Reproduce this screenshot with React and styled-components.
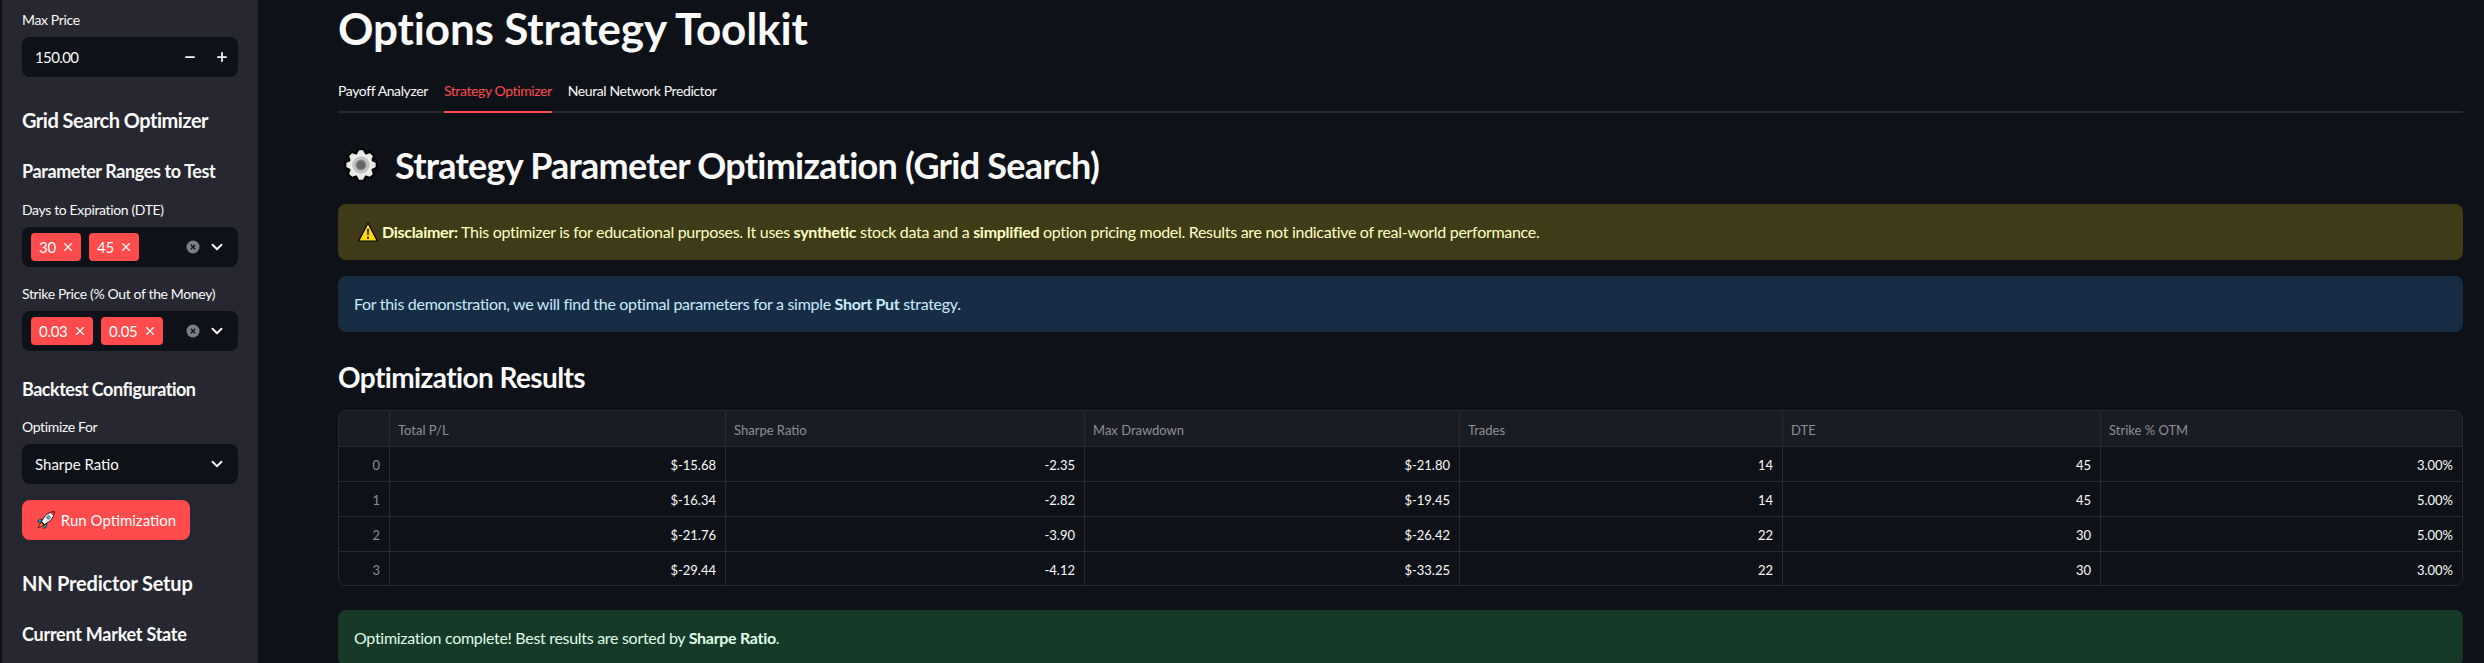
import React from 'react'
import styled, { createGlobalStyle } from 'styled-components'
import { ChevronDown, Minus, Plus, X } from 'lucide-react'

const GlobalStyle = createGlobalStyle`
  html, body {
    margin: 0;
    height: 100%;
    overflow: hidden;
    background: #0e1117;
  }
  * { box-sizing: border-box; }
  body {
    font-family: "Lato", "Noto Sans", sans-serif;
    color: #fafafa;
  }
`

const Page = styled.div`
  display: flex;
  height: 663px;
  padding-left: 2px;
  overflow: hidden;
  background: #0e1117;
`

const Sidebar = styled.aside`
  width: 256px;
  flex: none;
  display: flex;
  flex-direction: column;
  background: #262730;
  padding: 9px 20px 0;
  overflow: hidden;
  > * { flex: none; }
`

const FieldLabel = styled.div`
  font-size: 14px;
  letter-spacing: -0.36px;
  line-height: 21px;
  height: 21px;
  margin-bottom: 7px;
  color: #fafafa;
  white-space: nowrap;
`

const Control = styled.div`
  height: 40px;
  background: #0e1117;
  border-radius: 8px;
  display: flex;
  align-items: center;
  font-size: 14px;
  margin-bottom: 16px;
`

const ValueText = styled.span`
  padding-left: 13px;
  flex: 1;
  font-size: 15px;
  letter-spacing: ${p => (p.$tight ? '-0.6px' : '0')};
`

const StepButton = styled.span`
  width: 32px;
  display: flex;
  justify-content: center;
  color: #fafafa;
`

const Chips = styled.div`
  flex: 1;
  display: flex;
  gap: 8px;
  padding-left: 9px;
`

const Chip = styled.span`
  height: 28px;
  width: ${p => p.$w}px;
  background: #ff4b4b;
  border-radius: 4px;
  color: #fff;
  display: flex;
  align-items: center;
  justify-content: space-between;
  padding: 0 6px 0 8px;
  font-size: 15px;
  letter-spacing: -0.3px;
`

const ClearSlot = styled.span`
  display: flex;
  margin-right: 2px;
`

const Caret = styled.span`
  width: 36px;
  padding-right: 6px;
  display: flex;
  justify-content: center;
  color: #fafafa;
`

const SideTitle = styled.h3`
  margin: ${p => p.$top}px 0 ${p => p.$after || 0}px;
  font-size: ${p => p.$size}px;
  letter-spacing: ${p => p.$track}px;
  line-height: 28px;
  height: 28px;
  font-weight: 700;
  color: #fafafa;
  white-space: nowrap;
`

const RunButton = styled.button`
  width: 168px;
  height: 40px;
  border: none;
  border-radius: 8px;
  background: #ff4b4b;
  color: #fff;
  font: inherit;
  font-size: 15px;
  display: flex;
  align-items: center;
  justify-content: center;
  gap: 5px;
  padding: 0;
`

const Main = styled.main`
  flex: 1;
  min-width: 0;
  padding: 0 21px 0 80px;
  overflow: hidden;
`

const Title = styled.h1`
  margin: 0;
  font-size: 44px;
  letter-spacing: -0.15px;
  line-height: 56px;
  font-weight: 700;
  color: #fafafa;
  white-space: nowrap;
`

const Tabs = styled.div`
  display: flex;
  gap: 16px;
  margin-top: 17px;
  height: 40px;
  border-bottom: 2px solid #262730;
`

const Tab = styled.div`
  height: 40px;
  font-size: 14px;
  letter-spacing: -0.4px;
  line-height: 36px;
  white-space: nowrap;
  color: ${p => (p.$active ? '#ff4b4b' : '#fafafa')};
  border-bottom: 2px solid ${p => (p.$active ? '#ff4b4b' : 'transparent')};
`

const SectionTitle = styled.h2`
  display: flex;
  align-items: center;
  gap: 16px;
  margin: 26px 0 13px 5px;
  height: 52px;
  font-size: 36px;
  letter-spacing: -0.75px;
  font-weight: 700;
  white-space: nowrap;
  color: #fafafa;
`

const Alert = styled.div`
  display: flex;
  align-items: center;
  gap: 4px;
  height: 56px;
  padding: 0 16px 0 ${p => p.$pad || 16}px;
  margin-bottom: 16px;
  border-radius: 8px;
  font-size: 16px;
  letter-spacing: -0.3px;
  line-height: 24px;
  background: ${p => p.$bg};
  color: ${p => p.$fg};
  b { font-weight: 700; }
  span { white-space: pre-wrap; }
  svg { flex: none; }
`

const SubTitle = styled.h3`
  margin: 25px 0 13px;
  height: 40px;
  font-size: 28px;
  letter-spacing: -0.6px;
  line-height: 40px;
  font-weight: 700;
  color: #fafafa;
`

const Grid = styled.div`
  border: 1px solid #262a31;
  border-radius: 8px;
  overflow: hidden;
  height: 176px;
  margin-bottom: 24px;
`

const Row = styled.div`
  display: grid;
  grid-template-columns: 50px 336px 359px 375px 323px 318px 1fr;
  height: 35px;
  background: ${p => (p.$head ? '#1a1c24' : '#0e1117')};
  & + & { border-top: 1px solid #262a31; }
`

const Cell = styled.div`
  display: flex;
  align-items: center;
  justify-content: ${p => (p.$head ? 'flex-start' : 'flex-end')};
  padding: 2px 9px 0 8px;
  font-size: 13px;
  color: ${p => (p.$muted ? '#8e9096' : '#fafafa')};
  & + & { border-left: 1px solid #262a31; }
`

// eight rounded teeth round the centre
const gearPoints = Array.from({ length: 8 }, (_, i) => {
  const a = (i * Math.PI) / 4 - Math.PI / 2
  const pt = (r, d) => `${(18 + r * Math.cos(a + d)).toFixed(2)},${(18 + r * Math.sin(a + d)).toFixed(2)}`
  return [pt(12.6, -0.39), pt(16, -0.17), pt(16, 0.17), pt(12.6, 0.39)].join(' ')
}).join(' ')

const GearIcon = () => (
  <svg width="36" height="36" viewBox="0 0 36 36">
    <polygon points={gearPoints} fill="#e8e8e8" stroke="#000" strokeWidth="2.2" strokeLinejoin="round" />
    <circle cx="18" cy="18" r="9.5" fill="#c4c4c4" stroke="#f4f4f4" strokeWidth="1.2" />
    <circle cx="18" cy="18" r="5" fill="#666" stroke="#939393" strokeWidth="1.2" />
  </svg>
)

const WarnIcon = () => (
  <svg width="20" height="20" viewBox="0 0 20 20">
    <path d="M10 1 19.300 19H.7z" fill="#ffd60a" stroke="#000" strokeWidth="1.200" strokeLinejoin="round" />
    <path d="M9 7h2l-.4 6.500h-1.200z" fill="#222" />
    <circle cx="10" cy="15.800" r="1.100" fill="#222" />
  </svg>
)

const RocketIcon = () => (
  <svg width="20" height="20" viewBox="0 0 20 20">
    <path d="M5 12 2 18l6-3z" fill="#f08a24" stroke="#3a1606" strokeWidth=".8" />
    <path d="M6 9 2.500 10l-1 2.500L5 12zM11 14l-1 3.500-2.500 1L8 15z" fill="#2a9fd8" stroke="#0b2a3a" strokeWidth=".7" />
    <path d="M18.500 1.500c-5 .5-8.500 2.500-11.500 7.500L5.500 11.500l3 3L11 13c5-3 7-6.500 7.500-11.500z" fill="#f4f6f8" stroke="#111" strokeWidth="1" />
    <path d="M18.500 1.500c-1.500.1-3 .5-4.300 1.100l3.200 3.200c.6-1.300 1-2.800 1.100-4.300z" fill="#d9242b" />
    <circle cx="12.500" cy="7.500" r="1.700" fill="#5fb6e5" stroke="#345" strokeWidth=".7" />
  </svg>
)

const ClearIcon = () => (
  <svg width="14" height="14" viewBox="0 0 14 14">
    <circle cx="7" cy="7" r="6.500" fill="#7c7e8a" />
    <path d="M4.800 4.800l4.400 4.400M9.200 4.800l-4.400 4.400" stroke="#14161c" strokeWidth="1.500" />
  </svg>
)

const MultiSelect = ({ values, width }) => (
  <Control>
    <Chips>
      {values.map(v => (
        <Chip key={v} $w={width}>
          {v}
          <X size={14} strokeWidth={2} />
        </Chip>
      ))}
    </Chips>
    <ClearSlot><ClearIcon /></ClearSlot>
    <Caret><ChevronDown size={18} strokeWidth={2.500} /></Caret>
  </Control>
)

const columns = ['', 'Total P/L', 'Sharpe Ratio', 'Max Drawdown', 'Trades', 'DTE', 'Strike % OTM']

const rows = [
  ['0', '$-15.68', '-2.35', '$-21.80', '14', '45', '3.00%'],
  ['1', '$-16.34', '-2.82', '$-19.45', '14', '45', '5.00%'],
  ['2', '$-21.76', '-3.90', '$-26.42', '22', '30', '5.00%'],
  ['3', '$-29.44', '-4.12', '$-33.25', '22', '30', '3.00%'],
]

const App = () => {
  return (
    <Page>
      <GlobalStyle />
      <Sidebar>
        <FieldLabel>Max Price</FieldLabel>
        <Control>
          <ValueText $tight>150.00</ValueText>
          <StepButton><Minus size={14} strokeWidth={3} /></StepButton>
          <StepButton><Plus size={14} strokeWidth={3} /></StepButton>
        </Control>

        <SideTitle $size={20} $track={-0.5} $top={13}>Grid Search Optimizer</SideTitle>
        <SideTitle $size={18} $track={-0.4} $top={23} $after={14}>Parameter Ranges to Test</SideTitle>
        <FieldLabel>Days to Expiration (DTE)</FieldLabel>
        <MultiSelect values={['30', '45']} width={50} />
        <FieldLabel>Strike Price (% Out of the Money)</FieldLabel>
        <MultiSelect values={['0.03', '0.05']} width={62} />

        <SideTitle $size={18} $track={-0.5} $top={8} $after={13}>Backtest Configuration</SideTitle>
        <FieldLabel>Optimize For</FieldLabel>
        <Control>
          <ValueText>Sharpe Ratio</ValueText>
          <Caret><ChevronDown size={18} strokeWidth={2.500} /></Caret>
        </Control>
        <RunButton><RocketIcon />Run Optimization</RunButton>

        <SideTitle $size={20} $track={-0.2} $top={29}>NN Predictor Setup</SideTitle>
        <SideTitle $size={18} $track={-0.25} $top={23}>Current Market State</SideTitle>
      </Sidebar>

      <Main>
        <Title>Options Strategy Toolkit</Title>
        <Tabs>
          <Tab>Payoff Analyzer</Tab>
          <Tab $active>Strategy Optimizer</Tab>
          <Tab>Neural Network Predictor</Tab>
        </Tabs>

        <SectionTitle><GearIcon />Strategy Parameter Optimization (Grid Search)</SectionTitle>

        <Alert $bg="#3e3b16" $fg="#ffffc2" $pad={20}>
          <WarnIcon />
          <span><b>Disclaimer:</b> This optimizer is for educational purposes. It uses <b>synthetic</b> stock data and a <b>simplified</b> option pricing model. Results are not indicative of real-world performance.</span>
        </Alert>
        <Alert $bg="#172d43" $fg="#c7ebff">
          <span>For this demonstration, we will find the optimal parameters for a simple <b>Short Put</b> strategy.</span>
        </Alert>

        <SubTitle>Optimization Results</SubTitle>

        <Grid>
          <Row $head>
            {columns.map((c, i) => <Cell key={i} $head $muted>{c}</Cell>)}
          </Row>
          {rows.map(r => (
            <Row key={r[0]}>
              {r.map((v, i) => <Cell key={i} $muted={i === 0}>{v}</Cell>)}
            </Row>
          ))}
        </Grid>

        <Alert $bg="#173928" $fg="#dffde9">
          <span>Optimization complete! Best results are sorted by <b>Sharpe Ratio</b>.</span>
        </Alert>
      </Main>
    </Page>
  )
}

export default App
